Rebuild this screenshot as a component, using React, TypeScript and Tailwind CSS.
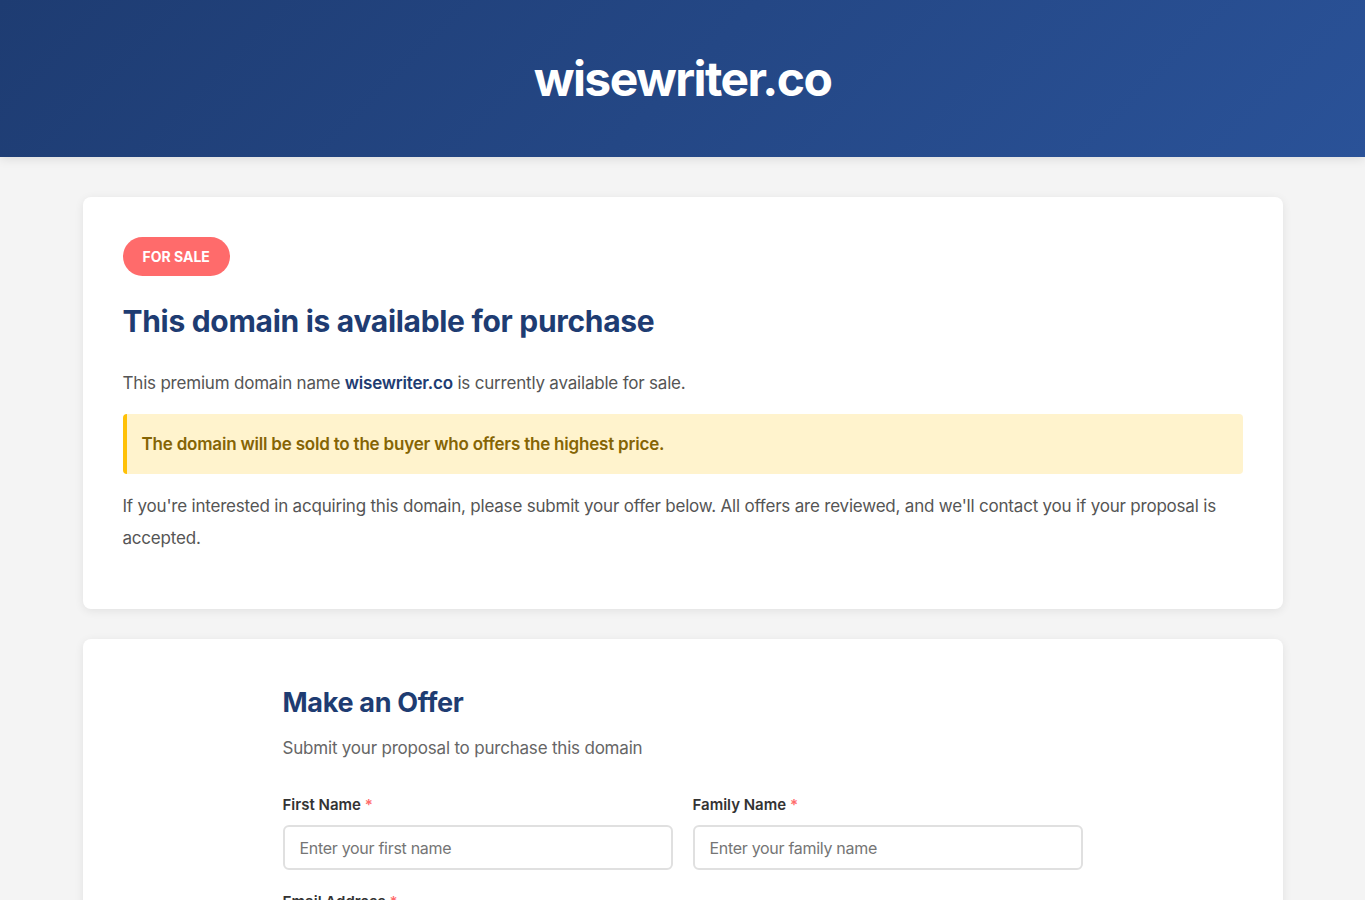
export default function App() {
  const font = { fontFamily: 'Inter, "Noto Sans", sans-serif' };
  return (
    <div className="min-h-screen bg-[#f4f4f4] text-[#333]" style={font}>
      <header className="bg-[linear-gradient(135deg,#1e3c72_0%,#2a5298_100%)] py-10 text-center shadow-[0_2px_10px_rgba(0,0,0,0.1)]">
        <h1 className="text-[48px] font-bold leading-[77px] tracking-[-1.6px] text-white">wisewriter.co</h1>
      </header>

      <main className="mx-auto max-w-[1200px] pt-10">
        {/* Sale notice */}
        <section className="rounded-lg bg-white p-10 shadow-[0_2px_10px_rgba(0,0,0,0.08)]">
          <span className="inline-block rounded-full bg-[#ff6b6b] px-5 py-2 text-[14px] font-bold leading-[23px] text-white">
            FOR SALE
          </span>
          <h2 className="mt-5 text-[30px] font-bold leading-[51px] tracking-[-0.3px] text-[#1e3c72]">
            This domain is available for purchase
          </h2>
          <p className="mt-5 text-[17px] leading-[32px] tracking-[-0.2px] text-[#555]">
            This premium domain name <strong className="font-semibold text-[#1e3c72]">wisewriter.co</strong> is currently available for sale.
          </p>
          <div className="mt-[15px] rounded border-l-4 border-[#ffc107] bg-[#fff3cd] px-[15px] py-4 text-[17px] font-semibold leading-[28px] tracking-[-0.2px] text-[#856404]">
            The domain will be sold to the buyer who offers the highest price.
          </div>
          <p className="mb-[15px] mt-4 text-[17px] leading-[32px] tracking-[-0.2px] text-[#555]">
            If you're interested in acquiring this domain, please submit your offer below. All offers are reviewed, and we'll contact you if your proposal is accepted.
          </p>
        </section>

        {/* Offer form */}
        <section className="mt-[30px] rounded-lg bg-white p-10 shadow-[0_2px_10px_rgba(0,0,0,0.08)]">
          <div className="mx-auto max-w-[800px]">
            <h2 className="text-[27px] font-bold leading-[48px] tracking-[-0.3px] text-[#1e3c72]">Make an Offer</h2>
            <p className="mt-2 text-[17px] leading-[26px] tracking-[-0.2px] text-[#666]">Submit your proposal to purchase this domain</p>

            <div className="mt-8 grid grid-cols-2 gap-5">
              <Field label="First Name" placeholder="Enter your first name" />
              <Field label="Family Name" placeholder="Enter your family name" />
            </div>
            <div className="mt-5">
              <Field label="Email Address" placeholder="Enter your email address" />
            </div>
          </div>
        </section>
      </main>
    </div>
  );
}

function Field({ label, placeholder }: { label: string; placeholder: string }) {
  return (
    <div>
      <label className="block text-[15px] font-semibold leading-[24px] text-[#333]">
        {label} <span className="text-[#ff6b6b]">*</span>
      </label>
      <input
        type="text"
        placeholder={placeholder}
        className="mt-2 h-[45px] w-full rounded-md border-2 border-[#e0e0e0] px-[15px] text-[16px] tracking-[-0.3px] text-[#333] outline-none placeholder:text-[#757575]"
      />
    </div>
  );
}
